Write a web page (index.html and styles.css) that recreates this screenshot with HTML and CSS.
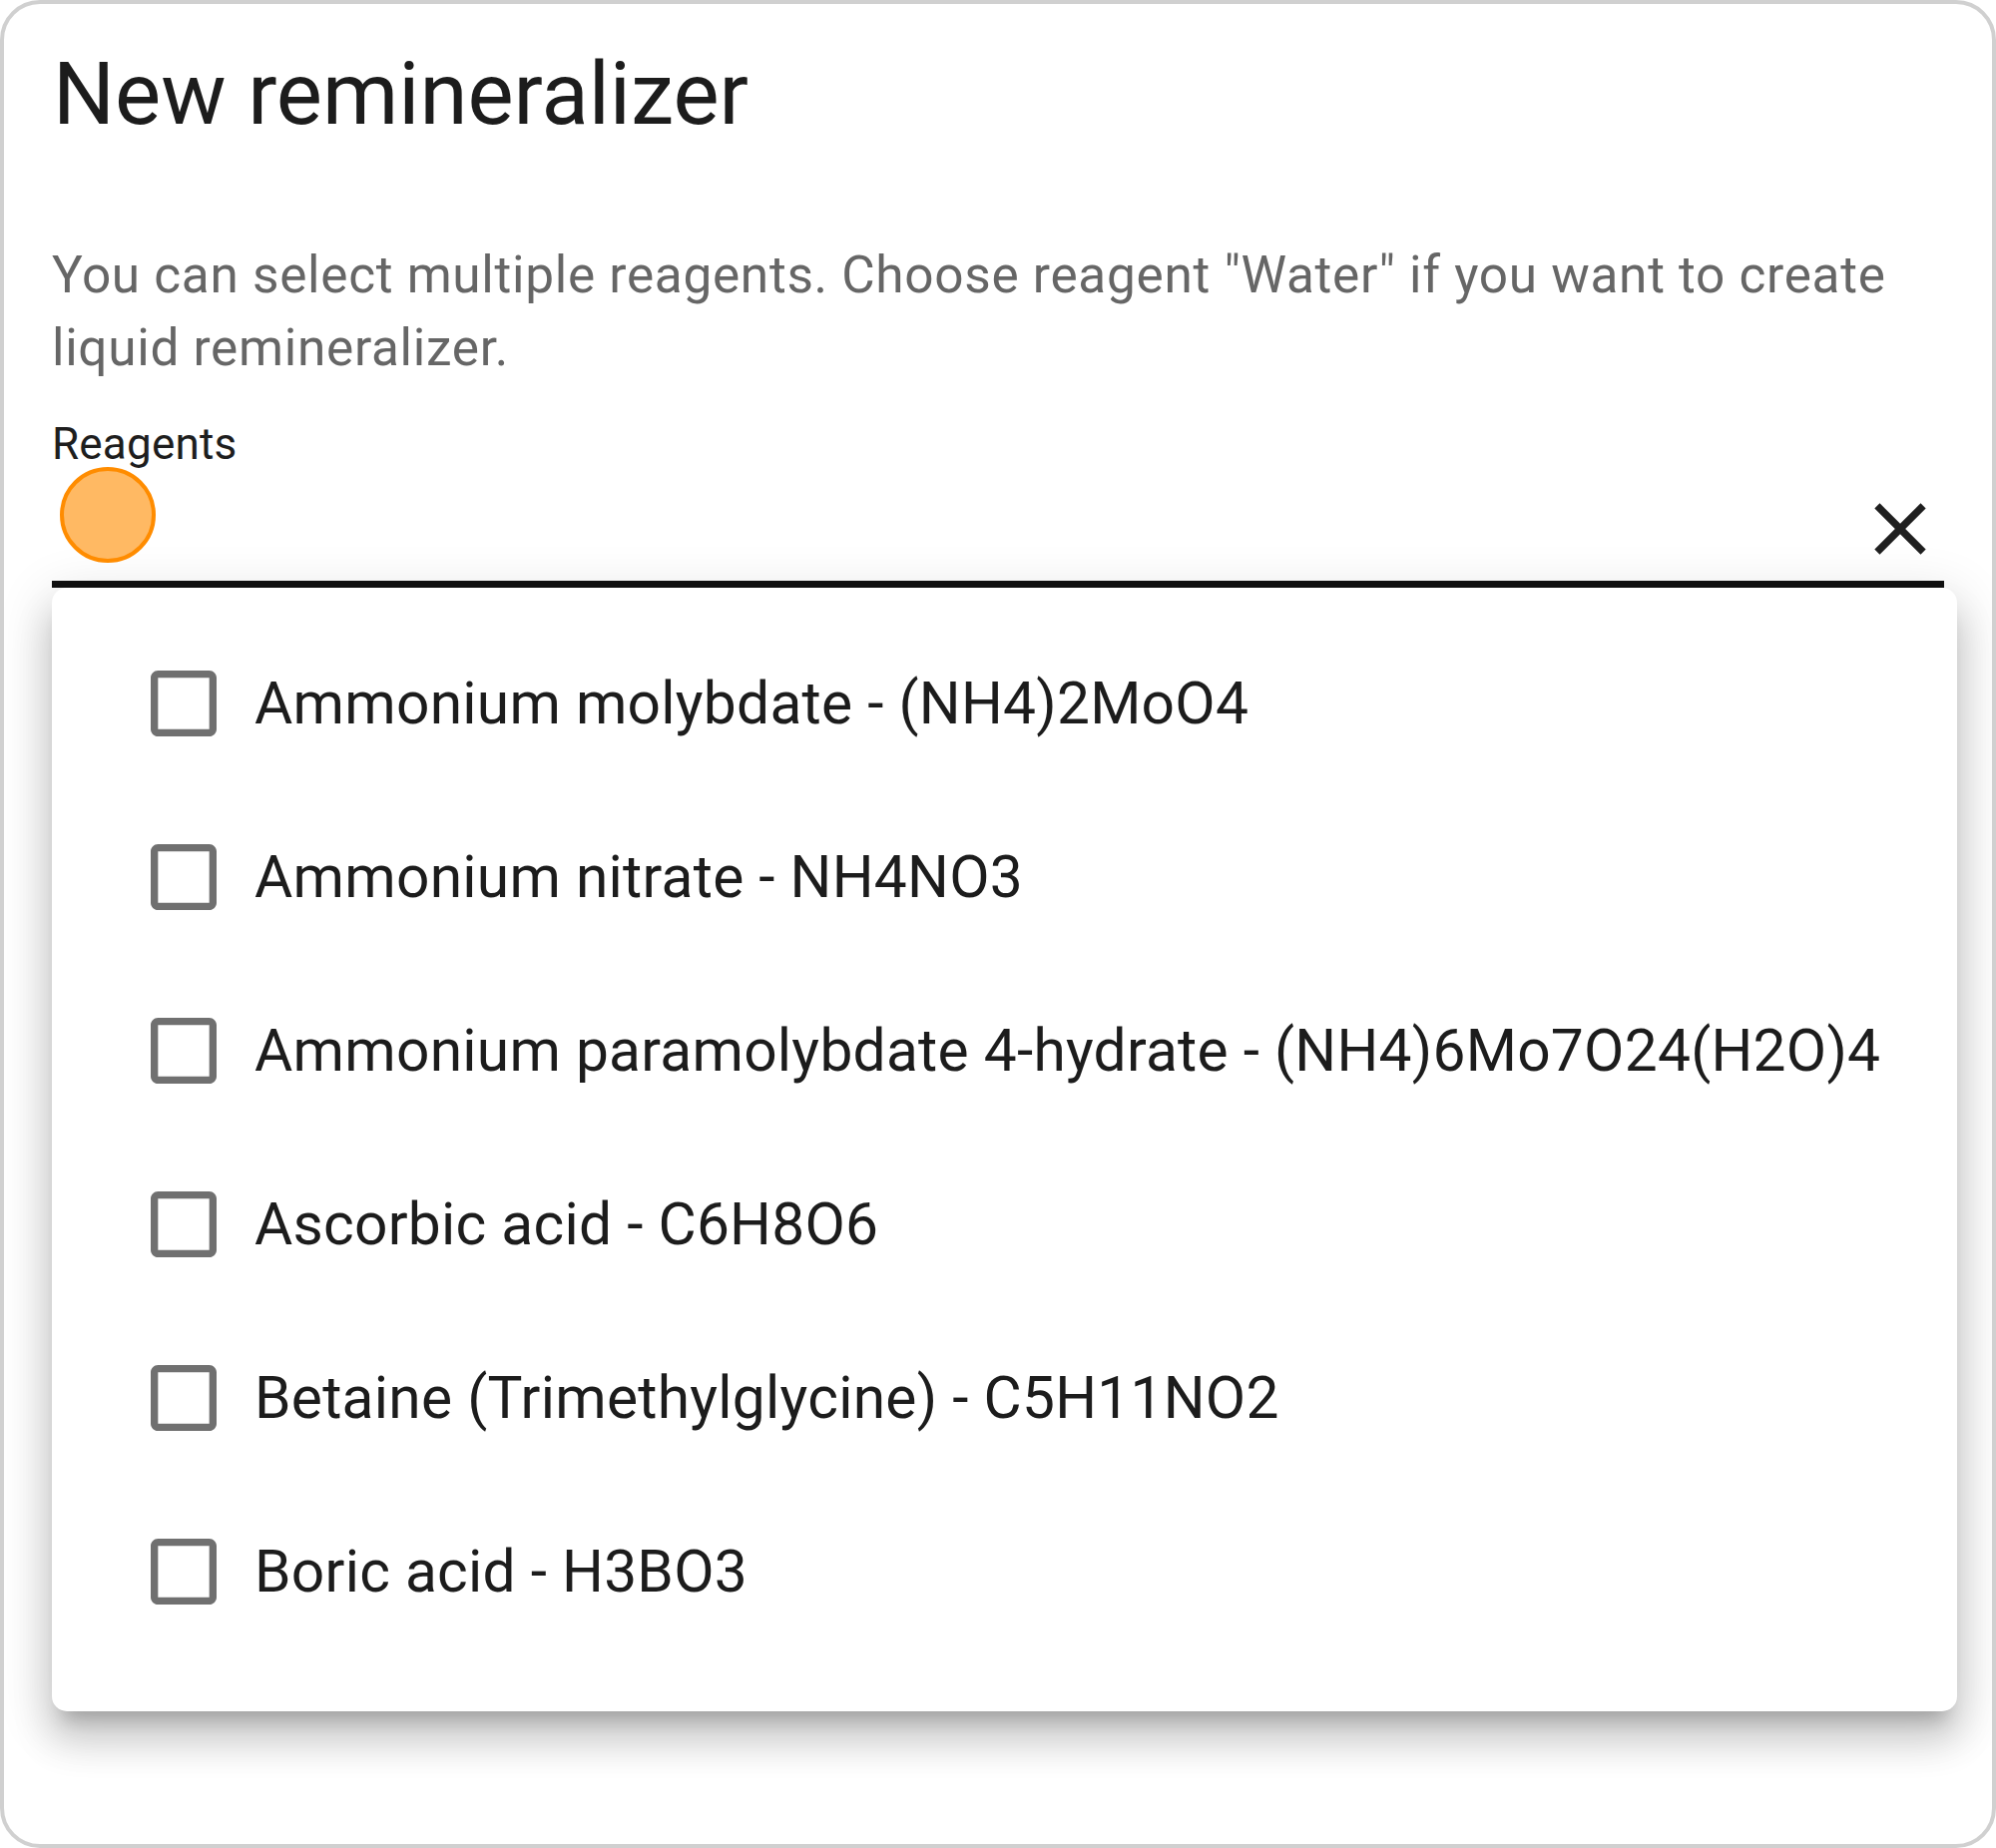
FILE: index.html
```html
<!DOCTYPE html>
<html lang="en">
<head>
<meta charset="utf-8">
<title>New remineralizer</title>
<link rel="stylesheet" href="styles.css">
</head>
<body>
<div class="dialog">
  <h2 class="title">New remineralizer</h2>
  <p class="desc">You can select multiple reagents. Choose reagent "Water" if you want to create liquid remineralizer.</p>
  <div class="field">
    <label class="label">Reagents</label>
    <div class="input-row">
      <span class="click-dot"></span>
      <span class="spacer"></span>
      <svg class="clear" viewBox="0 0 24 24"><path d="M19 6.41 17.59 5 12 10.59 6.41 5 5 6.41 10.59 12 5 17.59 6.41 19 12 13.41 17.59 19 19 17.59 13.41 12z"/></svg>
    </div>
    <div class="underline"></div>
    <ul class="menu">
      <li class="item"><svg class="cb" viewBox="0 0 24 24"><path d="M19 5v14H5V5h14m0-2H5c-1.1 0-2 .9-2 2v14c0 1.1.9 2 2 2h14c1.1 0 2-.9 2-2V5c0-1.1-.9-2-2-2z"/></svg><span class="txt">Ammonium molybdate - (NH4)2MoO4</span></li>
      <li class="item"><svg class="cb" viewBox="0 0 24 24"><path d="M19 5v14H5V5h14m0-2H5c-1.1 0-2 .9-2 2v14c0 1.1.9 2 2 2h14c1.1 0 2-.9 2-2V5c0-1.1-.9-2-2-2z"/></svg><span class="txt">Ammonium nitrate - NH4NO3</span></li>
      <li class="item"><svg class="cb" viewBox="0 0 24 24"><path d="M19 5v14H5V5h14m0-2H5c-1.1 0-2 .9-2 2v14c0 1.1.9 2 2 2h14c1.1 0 2-.9 2-2V5c0-1.1-.9-2-2-2z"/></svg><span class="txt">Ammonium paramolybdate 4-hydrate - (NH4)6Mo7O24(H2O)4</span></li>
      <li class="item"><svg class="cb" viewBox="0 0 24 24"><path d="M19 5v14H5V5h14m0-2H5c-1.1 0-2 .9-2 2v14c0 1.1.9 2 2 2h14c1.1 0 2-.9 2-2V5c0-1.1-.9-2-2-2z"/></svg><span class="txt">Ascorbic acid - C6H8O6</span></li>
      <li class="item"><svg class="cb" viewBox="0 0 24 24"><path d="M19 5v14H5V5h14m0-2H5c-1.1 0-2 .9-2 2v14c0 1.1.9 2 2 2h14c1.1 0 2-.9 2-2V5c0-1.1-.9-2-2-2z"/></svg><span class="txt">Betaine (Trimethylglycine) - C5H11NO2</span></li>
      <li class="item"><svg class="cb" viewBox="0 0 24 24"><path d="M19 5v14H5V5h14m0-2H5c-1.1 0-2 .9-2 2v14c0 1.1.9 2 2 2h14c1.1 0 2-.9 2-2V5c0-1.1-.9-2-2-2z"/></svg><span class="txt">Boric acid - H3BO3</span></li>
    </ul>
  </div>
</div>
</body>
</html>
```

FILE: styles.css
```css
* { box-sizing: border-box; }
html, body {
  margin: 0;
  padding: 0;
  background: #ffffff;
}
body {
  font-family: Roboto, "Noto Sans", sans-serif;
  width: 2000px;
  height: 1852px;
}
.dialog {
  width: 2000px;
  height: 1852px;
  border: 4px solid #d0d0d0;
  border-radius: 40px;
  padding: 32px 48px 0 48px;
  background: #fff;
  overflow: hidden;
}
.title {
  margin: 0;
  font-size: 87px;
  font-weight: 400;
  line-height: 117px;
  color: #1c1c1c;
  padding-left: 1px;
}
.desc {
  margin: 86px 0 0 0;
  font-size: 51.33px;
  line-height: 73.4px;
  letter-spacing: 0.7px;
  color: #666666;
}
.field {
  margin-top: 28px;
  display: flex;
  flex-direction: column;
}
.label {
  font-size: 44px;
  line-height: 63px;
  color: #1e1e1e;
  letter-spacing: 0.2px;
}
.input-row {
  position: relative;
  height: 105px;
  display: flex;
  align-items: center;
}
.spacer { flex: 1; }
.click-dot {
  position: absolute;
  left: 8px;
  top: -9px;
  width: 96px;
  height: 96px;
  border-radius: 50%;
  background: #ffb963;
  border: 4px solid #ff8c00;
}
.clear {
  width: 88px;
  height: 88px;
  fill: #1f1f1f;
  margin-right: 0;
  margin-top: 2px;
}
.underline {
  height: 7px;
  background: #111111;
}
.menu {
  list-style: none;
  margin: 0 -13px 0 0;
  padding: 29px 0 53px 0;
  background: #fff;
  border-radius: 15px;
  box-shadow: 0 18px 18px -11px rgba(0,0,0,0.2), 0 29px 37px 4px rgba(0,0,0,0.14), 0 11px 51px 7px rgba(0,0,0,0.12);
}
.item {
  height: 174px;
  display: flex;
  align-items: center;
  padding-left: 88px;
}
.cb {
  width: 88px;
  height: 88px;
  fill: #707070;
  flex: none;
}
.txt {
  margin-left: 27px;
  font-size: 58.67px;
  line-height: 88px;
  color: #1c1c1c;
  letter-spacing: 0.26px;
  white-space: nowrap;
}
```
